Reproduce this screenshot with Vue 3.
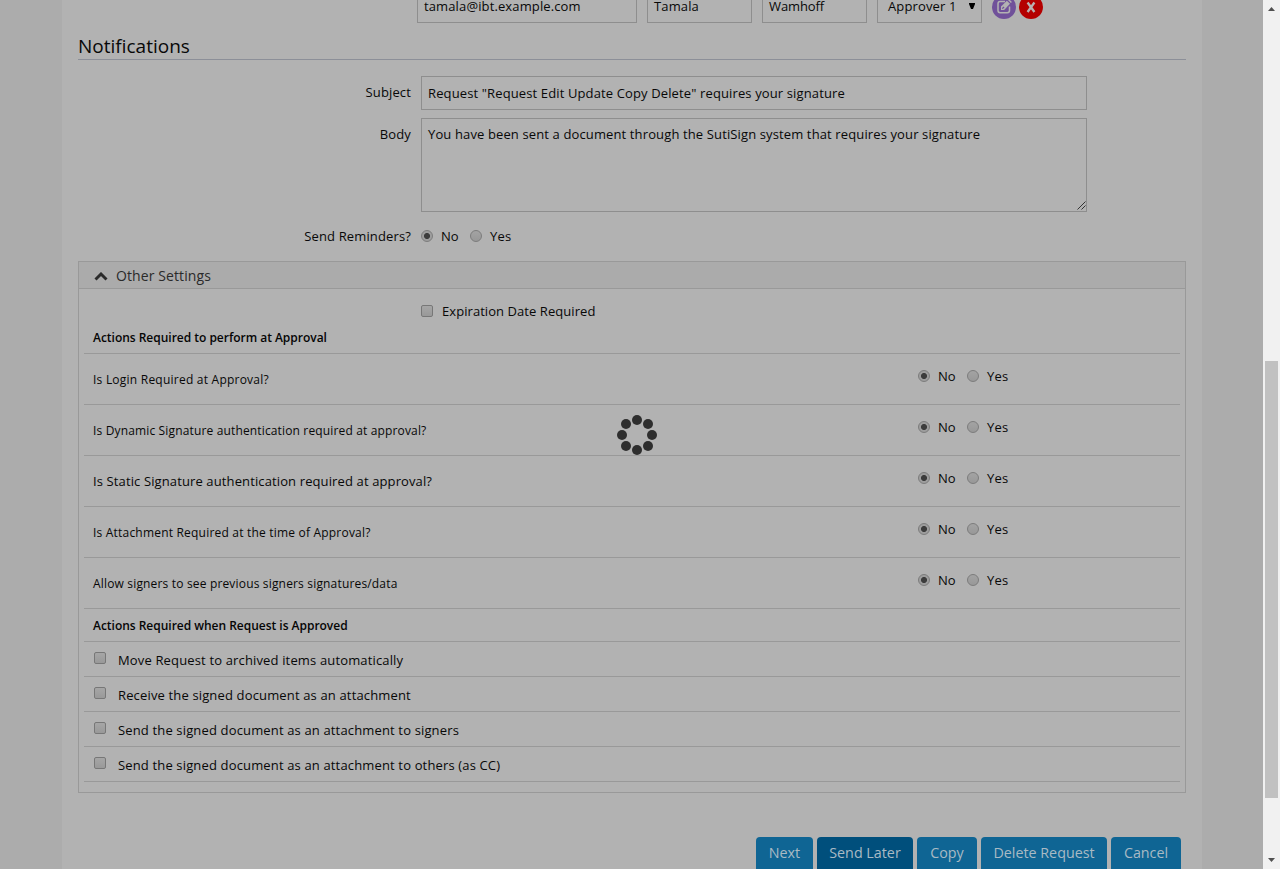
<script setup>
const questions = [
  { text: 'Is Login Required at Approval?', fit: 'q1' },
  { text: 'Is Dynamic Signature authentication required at approval?', fit: 'q2' },
  { text: 'Is Static Signature authentication required at approval?', fit: 'q3' },
  { text: 'Is Attachment Required at the time of Approval?', fit: 'q4' },
  { text: 'Allow signers to see previous signers signatures/data', fit: 'q5' },
]
const options = [
  'Move Request to archived items automatically',
  'Receive the signed document as an attachment',
  'Send the signed document as an attachment to signers',
  'Send the signed document as an attachment to others (as CC)',
]
const dots = [[20, 5], [31, 9], [35, 20], [31, 31], [20, 35], [9, 31], [5, 20], [9, 9]]
</script>

<template>
  <div class="window">
    <div class="viewport">
      <main class="page">
        <div class="signer">
          <div class="field email"><span>tamala@ibt.example.com</span></div>
          <div class="field name"><span>Tamala</span></div>
          <div class="field name last"><span>Wamhoff</span></div>
          <div class="field name role">
            <span>Approver 1</span>
            <svg width="6" height="6" viewBox="0 0 6 6"><path d="M0 0H6V1L4 6H2L0 1Z" fill="#000" /></svg>
          </div>
          <svg class="round" width="24" height="24" viewBox="0 0 24 24">
            <circle cx="12" cy="12" r="12" fill="#70519a" />
            <path d="M13 6.5H8.2Q6 6.5 6 8.7V15.5Q6 17.700 8.200 17.700H15.300Q17.500 17.700 17.500 15.500V11.500" fill="none" stroke="#b2b2b2" stroke-width="1.500" />
            <path d="M9 15V11.600L14.900 5.700L18 8.800L12.100 15Z" fill="#b2b2b2" />
            <path d="M15.800 4.800L16.800 3.900L19.900 7L18.900 8Z" fill="#b2b2b2" />
            <path d="M10.300 13.600L12 12" stroke="#70519a" stroke-width="1.300" />
          </svg>
          <svg class="round" width="24" height="24" viewBox="0 0 24 24">
            <circle cx="12" cy="12" r="12" fill="#b40000" />
            <path d="M8.600 7.500L15.400 17M15.400 7.500L8.600 17" stroke="#b9b2b2" stroke-width="2.300" />
          </svg>
        </div>

        <h2><span>Notifications</span></h2>

        <div class="row subject">
          <label>Subject</label>
          <div class="field wide"><span>Request "Request Edit Update Copy Delete" requires your signature</span></div>
        </div>
        <div class="row body">
          <label>Body</label>
          <div class="field wide area">
            <span>You have been sent a document through the SutiSign system that requires your signature</span>
            <svg class="grip" width="9" height="9" viewBox="0 0 9 9"><path d="M.5 8.500L8.500 .5M4.500 8.500L8.500 4.500" stroke="#333" stroke-width="1" /></svg>
          </div>
        </div>
        <div class="row remind">
          <label>Send Reminders?</label>
          <div class="choice"><i class="radio on"></i><span class="no">No</span><i class="radio"></i><span class="yes">Yes</span></div>
        </div>

        <section class="panel">
          <header>
            <svg width="14" height="9" viewBox="0 0 14 9"><path d="M1.500 7.500L7 2L12.500 7.500" fill="none" stroke="#2b2b2b" stroke-width="2.900" /></svg>
            <span>Other Settings</span>
          </header>
          <div class="settings">
            <div class="expire"><i class="check"></i><span>Expiration Date Required</span></div>
            <h3 class="first"><span>Actions Required to perform at Approval</span></h3>
            <div v-for="q in questions" :key="q.fit" class="question">
              <span :class="['text', q.fit]">{{ q.text }}</span>
              <div class="choice"><i class="radio on"></i><span class="no">No</span><i class="radio"></i><span class="yes">Yes</span></div>
            </div>
            <h3 class="second"><span>Actions Required when Request is Approved</span></h3>
            <div v-for="o in options" :key="o" class="option">
              <i class="check"></i><span>{{ o }}</span>
            </div>
          </div>
        </section>

        <div class="buttons">
          <div class="btn b1"><span>Next</span></div>
          <div class="btn b2"><span>Send Later</span></div>
          <div class="btn b3"><span>Copy</span></div>
          <div class="btn b4"><span>Delete Request</span></div>
          <div class="btn b5"><span>Cancel</span></div>
        </div>
      </main>
      <svg class="spinner" width="40" height="40" viewBox="0 0 40 40">
        <circle v-for="(d, i) in dots" :key="i" :cx="d[0]" :cy="d[1]" r="5" fill="#2e2e2e" />
      </svg>
    </div>
    <div class="scrollbar">
      <svg width="7" height="4" viewBox="0 0 7 4"><path d="M0 4L3.500 0L7 4Z" fill="#505050" /></svg>
      <div class="thumb"></div>
      <svg class="down" width="7" height="4" viewBox="0 0 7 4"><path d="M0 0L3.500 4L7 0Z" fill="#505050" /></svg>
    </div>
  </div>
</template>

<style>
body { margin: 0; overflow: hidden; background: #acacac; }
</style>

<style scoped>
.window { display: flex; width: 1280px; height: 869px; overflow: hidden; font: 13px/20px "Open Sans", "Noto Sans", sans-serif; color: #080808; white-space: nowrap; }
.window * { box-sizing: border-box; }
svg { display: block; flex: none; }
.viewport { position: relative; width: 1263px; background: #acacac; overflow: hidden; }
.page { width: 1140px; height: 869px; margin-left: 62px; padding: 0 16px; background: #b2b2b2; overflow: hidden; }
.field { border: 1px solid #8e8e8e; height: 34px; padding: 6px; letter-spacing: .126px; }
.signer { display: flex; align-items: flex-start; gap: 10px; margin-top: -11px; padding-left: 339px; height: 45px; line-height: 12px; }
.signer .field { padding-top: 10px; }
.signer .field > span { display: block; }
.email { width: 220px; }
.name { width: 105px; }
.signer .last { letter-spacing: -.1px; }
.signer .role { display: flex; justify-content: space-between; padding-left: 10px; }
.role svg { margin-top: 3px; }
.round { margin-top: 6px; }
.round + .round { margin-left: -7px; }
h2 { margin: 0; height: 26px; border-bottom: 1px solid #8c8f98; font-size: 19px; font-weight: 400; line-height: 24px; }
.row { display: flex; }
.row label { width: 333px; margin-right: 10px; text-align: right; letter-spacing: .13px; }
.subject { margin-top: 16px; }
.subject label { padding-top: 6px; }
.wide { width: 666px; }
.body { margin-top: 8px; }
.body label { padding-top: 6px; }
.area { position: relative; height: 94px; padding-top: 5px; }
.grip { position: absolute; right: 0; bottom: 1px; }
.remind { margin-top: 14px; height: 35px; }
.choice { display: flex; align-items: center; height: 20px; }
.radio { flex: none; width: 12px; height: 12px; border: 1px solid #7c7c7c; border-radius: 50%; background: linear-gradient(#a3a3a3, #989898); }
.radio.on { background: radial-gradient(circle, #3c3c3c 0 2.700px, #9d9d9d 3.300px); }
.no { width: 31px; padding-left: 8px; margin-right: 6px; }
.yes { padding-left: 8px; letter-spacing: .2px; }
.check { flex: none; display: block; width: 12px; height: 12px; border: 1px solid #777; border-radius: 2px; background: linear-gradient(#a6a6a6, #999); }
.panel { height: 532px; border: 1px solid #999; }
.panel header { display: flex; height: 27px; padding-left: 15px; border-bottom: 1px solid #999; background: #ababab; color: #2a2a2a; font-size: 14px; line-height: 28px; letter-spacing: .1px; }
.panel header svg { margin: 10px 8px 0 0; }
.settings { padding: 0 5px; }
.expire { display: flex; align-items: center; height: 38px; padding: 6px 0 0 337px; }
.expire span { padding-left: 9px; letter-spacing: .06px; }
h3 { margin: 0; padding-left: 9px; border-bottom: 1px solid #999; font-size: 12px; font-weight: 600; color: #050505; letter-spacing: -.02px; }
.first { height: 27px; line-height: 22px; }
.second { height: 33px; line-height: 33px; }
.question { display: flex; height: 51px; padding-left: 9px; border-bottom: 1px solid #999; font-size: 12px; }
.question .text { width: 825px; padding-top: 16px; }
.q1 { letter-spacing: .23px; }
.q2 { letter-spacing: .15px; }
.question .q3 { padding-top: 15px; font-size: 13px; letter-spacing: .12px; }
.q4 { letter-spacing: .2px; }
.q5 { letter-spacing: .17px; }
.question .choice { margin-top: 12px; font-size: 13px; }
.option { display: flex; height: 35px; padding-left: 10px; border-bottom: 1px solid #999; }
.option .check { margin-top: 10px; }
.option span { padding: 8px 0 0 12px; letter-spacing: .15px; }
.buttons { display: flex; gap: 4px; margin: 44px 0 0 678px; }
.btn { height: 36px; border-radius: 4px; background: #0f6594; color: #a9bac4; font-size: 14.300px; line-height: 31px; text-align: center; }
.b1 { width: 57px; }
.b2 { width: 96px; background: #004f7c; }
.b3 { width: 60px; }
.b4 { width: 126px; }
.b5 { width: 70px; }
.spinner { position: absolute; left: 617px; top: 415px; }
.scrollbar { display: flex; flex-direction: column; align-items: center; width: 17px; padding-top: 7px; background: #f1f1f1; }
.thumb { width: 13px; height: 437px; margin-top: 350px; background: #c1c1c1; }
.down { margin-top: 60px; }
</style>
